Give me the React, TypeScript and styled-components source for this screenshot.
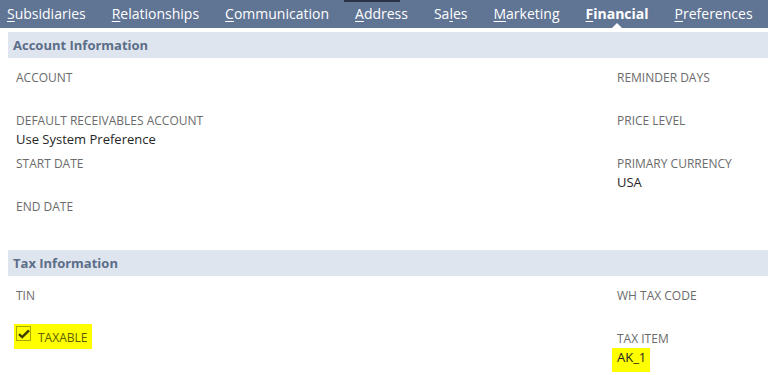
import * as React from "react";
import styled, { createGlobalStyle } from "styled-components";

const GlobalStyle = createGlobalStyle`
	body {
		margin: 0;
		background: #fff;
		font-family: "Open Sans", "Liberation Sans", sans-serif;
	}
`;

const Page = styled.div`
	width: 768px;
	height: 375px;
	overflow: hidden;
`;

const TabBar = styled.ul`
	display: flex;
	height: 28px;
	margin: 0 0 4px;
	padding: 0 0 0 7px;
	list-style: none;
	background-color: #607494;
	gap: 26px;
`;

const Tab = styled.li<{ active?: boolean; hovered?: boolean }>`
	position: relative;
	height: 28px;
	line-height: 28px;
	font-size: 14px;
	color: #fff;
	font-weight: ${(p) => (p.active ? 700 : 400)};
	white-space: nowrap;
	u {
		text-decoration-thickness: 1px;
		text-underline-offset: 2px;
	}
	${(p) =>
		p.active &&
		`&:after {
			content: "";
			position: absolute;
			left: 50%;
			bottom: 0;
			margin-left: -5px;
			border-left: 5px solid transparent;
			border-right: 5px solid transparent;
			border-bottom: 5px solid #fff;
		}`}
	${(p) =>
		p.hovered &&
		`&:before {
			content: "";
			position: absolute;
			left: -11px;
			top: 0;
			width: 56px;
			height: 2px;
			background: #2b3447;
		}`}
`;

const Section = styled.section`
	margin: 0 0 10px 8px;
`;

const SectionHeader = styled.h2`
	margin: 0;
	height: 26px;
	line-height: 26px;
	padding-left: 5px;
	background-color: #dfe5ee;
	color: #5b6d88;
	font-size: 13px;
	font-weight: 700;
`;

const FieldGrid = styled.div`
	display: grid;
	grid-template-columns: 1fr 151px;
	grid-auto-rows: 43px;
	padding: 10px 0 0 8px;
`;

const Field = styled.div`
	display: flex;
	flex-direction: column;
	align-items: flex-start;
	padding-top: 1px;
`;

const Label = styled.span<{ tone?: string }>`
	font-size: 12px;
	line-height: 18px;
	color: ${(p) => p.tone || "#6b6b6b"};
	text-transform: uppercase;
`;

const Value = styled.span<{ mark?: boolean }>`
	font-size: 13px;
	line-height: 18px;
	color: #262626;
	${(p) => p.mark && "background: #ffff00; margin-left: -5px; padding: 0 4px 6px 5px;"}
`;

const CheckRow = styled.label`
	display: inline-flex;
	align-items: center;
	gap: 7px;
	margin: -6px 0 0 -2px;
	padding: 0 5px 0 2px;
	height: 25px;
	background: #ffff00;
`;

const Box = styled.span`
	display: inline-flex;
	align-items: center;
	justify-content: center;
	width: 15px;
	height: 15px;
	box-sizing: border-box;
	border: 1px solid #a8a800;
	margin-top: -6px;
`;

const Tick = () => (
	<svg width="12" height="10" viewBox="0 0 12 10">
		<path d="M1 5.2 L4.2 8.2 L11 1.4" fill="none" stroke="#3d3d00" strokeWidth="2.4" />
	</svg>
);

const CheckText = styled(Label)`
	margin-top: 3px;
`;

const tabs = [
	{ pre: "", key: "S", post: "ubsidiaries" },
	{ pre: "", key: "R", post: "elationships" },
	{ pre: "", key: "C", post: "ommunication" },
	{ pre: "", key: "A", post: "ddress", hovered: true },
	{ pre: "Sa", key: "l", post: "es" },
	{ pre: "", key: "M", post: "arketing" },
	{ pre: "", key: "F", post: "inancial", active: true },
	{ pre: "", key: "P", post: "references" },
];

export default function App() {
	return (
		<Page>
			<GlobalStyle />
			<TabBar>
				{tabs.map((t) => (
					<Tab key={t.post} active={t.active} hovered={t.hovered}>
						{t.pre}
						<u>{t.key}</u>
						{t.post}
					</Tab>
				))}
			</TabBar>

			<Section>
				<SectionHeader>Account Information</SectionHeader>
				<FieldGrid>
					<Field>
						<Label>Account</Label>
					</Field>
					<Field>
						<Label>Reminder Days</Label>
					</Field>
					<Field>
						<Label>Default Receivables Account</Label>
						<Value>Use System Preference</Value>
					</Field>
					<Field>
						<Label>Price Level</Label>
					</Field>
					<Field>
						<Label>Start Date</Label>
					</Field>
					<Field>
						<Label>Primary Currency</Label>
						<Value>USA</Value>
					</Field>
					<Field>
						<Label>End Date</Label>
					</Field>
					<Field />
				</FieldGrid>
			</Section>

			<Section>
				<SectionHeader>Tax Information</SectionHeader>
				<FieldGrid>
					<Field>
						<Label>TIN</Label>
					</Field>
					<Field>
						<Label>WH Tax Code</Label>
					</Field>
					<Field>
						<CheckRow>
							<Box>
								<Tick />
							</Box>
							<CheckText tone="#5e5e00">Taxable</CheckText>
						</CheckRow>
					</Field>
					<Field>
						<Label>Tax Item</Label>
						<Value mark>AK_1</Value>
					</Field>
				</FieldGrid>
			</Section>
		</Page>
	);
}
